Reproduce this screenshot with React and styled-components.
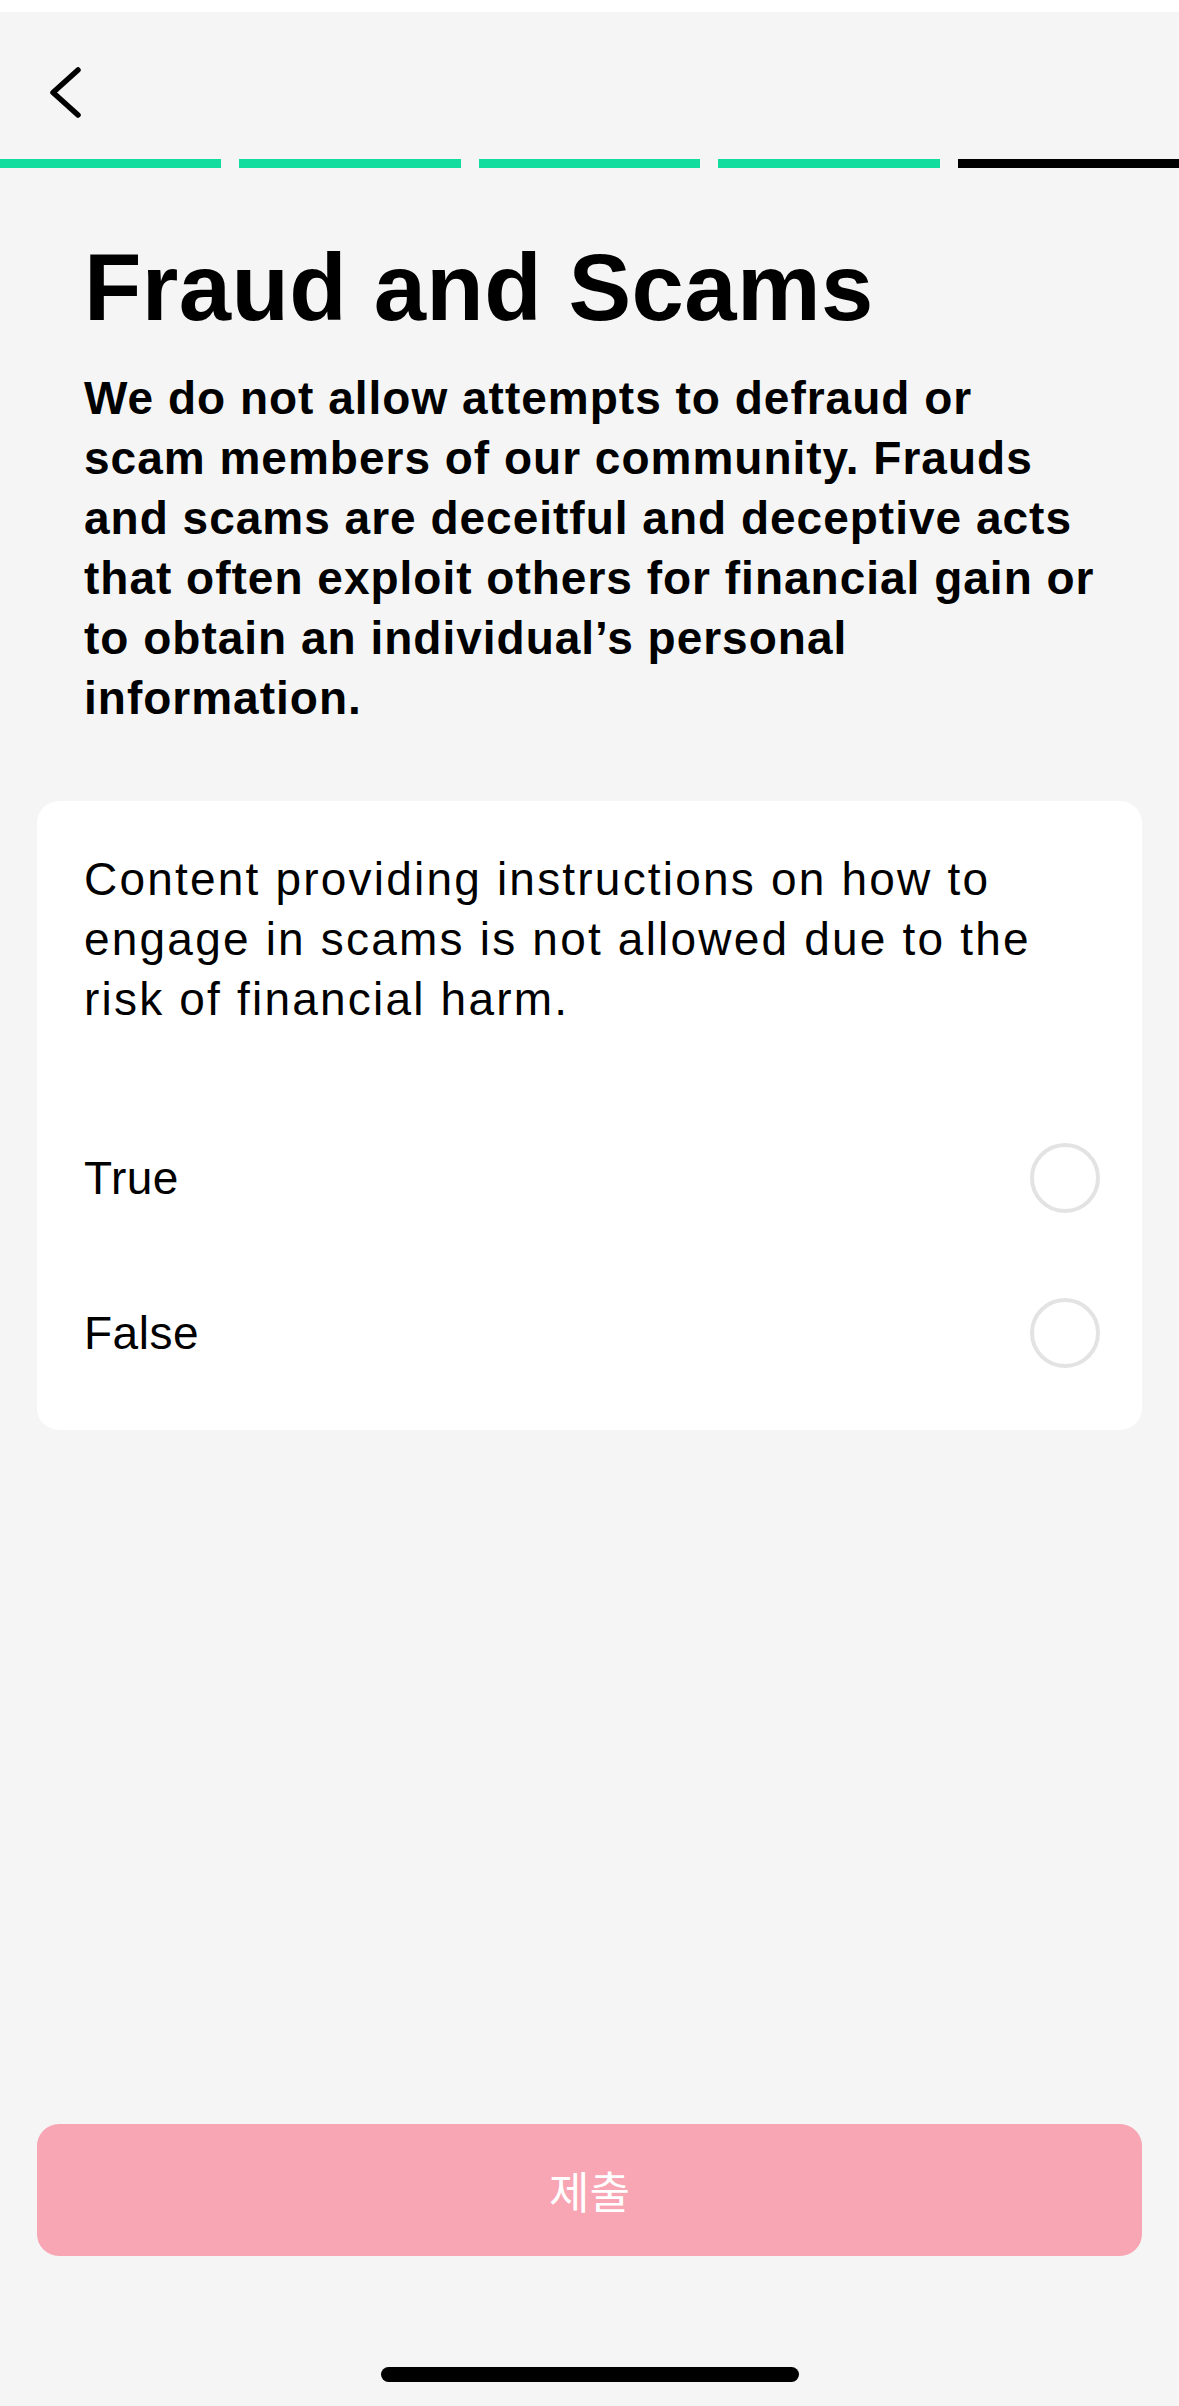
import React, { useState } from 'react';
import styled, { createGlobalStyle } from 'styled-components';

const GlobalStyle = createGlobalStyle`
  * { box-sizing: border-box; }
  html, body {
    margin: 0;
    padding: 0;
    background: #f5f5f5;
    font-family: 'Liberation Sans', Arial, sans-serif;
    color: #000;
  }
`;

const Page = styled.div`
  min-height: 2406px;
  display: flex;
  flex-direction: column;
  background: #f5f5f5;
`;

const StatusStrip = styled.div`
  height: 12px;
  background: #fff;
`;

const Header = styled.header`
  height: 147px;
  padding: 55px 0 0 50px;
`;

const BackButton = styled.button`
  padding: 0;
  border: 0;
  background: none;
  display: block;
  cursor: pointer;
`;

const Progress = styled.div`
  display: flex;
  gap: 18px;
  height: 9px;
`;

const Segment = styled.div`
  flex: 1;
  background: ${({ done }) => (done ? '#13dc9f' : '#000')};
`;

const Content = styled.main`
  padding: 0 37px;
`;

const Title = styled.h1`
  margin: 73px 0 0 47px;
  font-size: 94px;
  line-height: 94px;
  font-weight: 700;
  letter-spacing: 0.4px;
`;

const Intro = styled.p`
  margin: 33px 0 0 47px;
  font-size: 46px;
  line-height: 60px;
  font-weight: 700;
  letter-spacing: 1px;
  white-space: nowrap;
`;

const Card = styled.section`
  margin-top: 73px;
  background: #fff;
  border-radius: 22px;
  padding: 48px 42px 20px 47px;
`;

const Question = styled.p`
  margin: 0 0 71px;
  font-size: 46px;
  line-height: 60px;
  letter-spacing: 2.2px;
  white-space: nowrap;
`;

const Option = styled.label`
  height: 155px;
  display: flex;
  align-items: center;
  justify-content: space-between;
  font-size: 46px;
  letter-spacing: 0.5px;
  cursor: pointer;
`;

const Radio = styled.span`
  width: 70px;
  height: 70px;
  border-radius: 50%;
  border: 4px solid ${({ checked }) => (checked ? '#fe2c55' : '#e3e3e3')};
  background: ${({ checked }) => (checked ? 'radial-gradient(circle, #fe2c55 0 40%, #fff 42%)' : '#fff')};
`;

const Footer = styled.div`
  margin-top: auto;
  padding: 0 37px;
`;

const SubmitButton = styled.button`
  width: 100%;
  height: 132px;
  border: 0;
  border-radius: 22px;
  background: ${({ active }) => (active ? '#fe2c55' : '#f8a5b4')};
  color: #fff;
  font-family: 'Noto Sans CJK KR', 'Liberation Sans', sans-serif;
  font-size: 44px;
  font-weight: 400;
`;

const HomeBar = styled.div`
  padding: 111px 0 24px;
  display: flex;
  justify-content: center;

  span {
    width: 418px;
    height: 15px;
    border-radius: 8px;
    background: #000;
  }
`;

const introLines = [
  'We do not allow attempts to defraud or',
  'scam members of our community. Frauds',
  'and scams are deceitful and deceptive acts',
  'that often exploit others for financial gain or',
  'to obtain an individual’s personal',
  'information.',
];

const questionLines = [
  'Content providing instructions on how to',
  'engage in scams is not allowed due to the',
  'risk of financial harm.',
];

const steps = [true, true, true, true, false];
const options = ['True', 'False'];

const App = () => {
  const [answer, setAnswer] = useState(null);

  return (
    <Page>
      <GlobalStyle />
      <StatusStrip />
      <Header>
        <BackButton aria-label="Back">
          <svg width="31" height="51" viewBox="0 0 31 51" fill="none">
            <polyline
              points="28,3 3,25.5 28,48"
              stroke="#000"
              strokeWidth="5.5"
              strokeLinecap="round"
              strokeLinejoin="round"
            />
          </svg>
        </BackButton>
      </Header>
      <Progress>
        {steps.map((done, i) => (
          <Segment key={i} done={done} />
        ))}
      </Progress>
      <Content>
        <Title>Fraud and Scams</Title>
        <Intro>
          {introLines.map((line, i) => (
            <React.Fragment key={i}>
              {line}
              {i < introLines.length - 1 && <br />}
            </React.Fragment>
          ))}
        </Intro>
        <Card>
          <Question>
            {questionLines.map((line, i) => (
              <React.Fragment key={i}>
                {line}
                {i < questionLines.length - 1 && <br />}
              </React.Fragment>
            ))}
          </Question>
          {options.map((opt) => (
            <Option key={opt} onClick={() => setAnswer(opt)}>
              <span>{opt}</span>
              <Radio checked={answer === opt} />
            </Option>
          ))}
        </Card>
      </Content>
      <Footer>
        <SubmitButton active={answer !== null}>제출</SubmitButton>
      </Footer>
      <HomeBar>
        <span />
      </HomeBar>
    </Page>
  );
};

export default App;
